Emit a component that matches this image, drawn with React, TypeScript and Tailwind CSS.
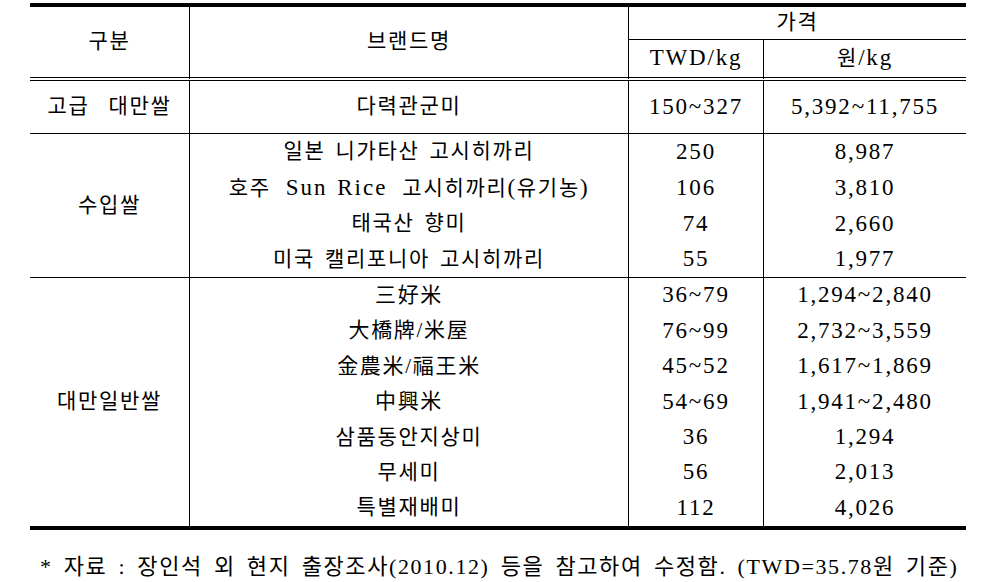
const ff = "font-['Liberation_Serif','Noto_Sans_CJK_KR',serif]";

const imported = [
  { brand: '일본 니가타산 고시히까리', twd: '250', won: '8,987' },
  { brand: 'sunrice', twd: '106', won: '3,810' },
  { brand: '태국산 향미', twd: '74', won: '2,660' },
  { brand: '미국 캘리포니아 고시히까리', twd: '55', won: '1,977' },
];

const general = [
  { brand: '三好米', twd: '36~79', won: '1,294~2,840' },
  { brand: '大橋牌/米屋', twd: '76~99', won: '2,732~3,559' },
  { brand: '金農米/福王米', twd: '45~52', won: '1,617~1,869' },
  { brand: '中興米', twd: '54~69', won: '1,941~2,480' },
  { brand: '삼품동안지상미', twd: '36', won: '1,294' },
  { brand: '무세미', twd: '56', won: '2,013' },
  { brand: '특별재배미', twd: '112', won: '4,026' },
];

function Brand({ name }: { name: string }) {
  if (name === 'sunrice') {
    return (
      <span className="tracking-[1.7px] [word-spacing:8px]">
        호주 <span className="text-[23px] tracking-[2px] [word-spacing:2px]">Sun Rice</span> 고시히까리<span className="text-[23px]">(</span>유기농<span className="text-[23px]">)</span>
      </span>
    );
  }
  return <span className="[word-spacing:3px]">{name}</span>;
}

export default function App() {
  const ko = 'text-[21px] tracking-[1.7px] font-normal';
  const num = 'text-[23px] tracking-[1.8px] font-normal';

  return (
    <div className={`w-[981px] h-[582px] bg-white text-black ${ff}`}>
      <div className="pt-[3px] pl-[30px]">
        <table className="w-[936px] table-fixed border-separate border-spacing-0 border-t-4 border-b-4 border-black text-center">
          <colgroup>
            <col className="w-[160px]" />
            <col className="w-[439px]" />
            <col className="w-[135px]" />
            <col className="w-[202px]" />
          </colgroup>
          <thead>
            <tr className="h-[33px]">
              <th rowSpan={2} className={`${ko} border-r border-b-4 border-double border-black`}>구분</th>
              <th rowSpan={2} className={`${ko} border-r border-b-4 border-double border-black`}>브랜드명</th>
              <th colSpan={2} className={`${ko} border-b border-black`}>가격</th>
            </tr>
            <tr className="h-[41px]">
              <th className={`${num} border-r border-b-4 border-double border-black`}>TWD/kg</th>
              <th className={`${num} border-b-4 border-double border-black`}>
                <span className="text-[21px]">원</span>/kg
              </th>
            </tr>
          </thead>
          <tbody>
            <tr className="h-[53px]">
              <td className={`${ko} [word-spacing:12px] border-r border-b border-black`}>고급 대만쌀</td>
              <td className={`${ko} border-r border-b border-black`}>다력관군미</td>
              <td className={`${num} border-r border-b border-black`}>150~327</td>
              <td className={`${num} border-b border-black`}>5,392~11,755</td>
            </tr>
            {imported.map((r, i) => {
              const last = i === imported.length - 1;
              const b = last ? 'border-b' : '';
              return (
                <tr key={r.twd} className="h-[36px]">
                  {i === 0 && (
                    <td rowSpan={4} className={`${ko} border-r border-b border-black`}>수입쌀</td>
                  )}
                  <td className={`${ko} border-r ${b} border-black`}>
                    <Brand name={r.brand} />
                  </td>
                  <td className={`${num} border-r ${b} border-black`}>{r.twd}</td>
                  <td className={`${num} ${b} border-black`}>{r.won}</td>
                </tr>
              );
            })}
            {general.map((r, i) => (
              <tr key={r.brand} className="h-[35.4px]">
                {i === 0 && (
                  <td rowSpan={7} className={`${ko} border-r border-black`}>대만일반쌀</td>
                )}
                <td className={`${ko} border-r border-black`}>{r.brand}</td>
                <td className={`${num} border-r border-black`}>{r.twd}</td>
                <td className={num}>{r.won}</td>
              </tr>
            ))}
          </tbody>
        </table>
      </div>
      <p className="mt-[22px] ml-[40px] text-[22px] leading-[30px] tracking-[1.6px] [word-spacing:4px] whitespace-nowrap">
        * 자료 : 장인석 외 현지 출장조사(2010.12) 등을 참고하여 수정함. (TWD=35.78원 기준)
      </p>
    </div>
  );
}
